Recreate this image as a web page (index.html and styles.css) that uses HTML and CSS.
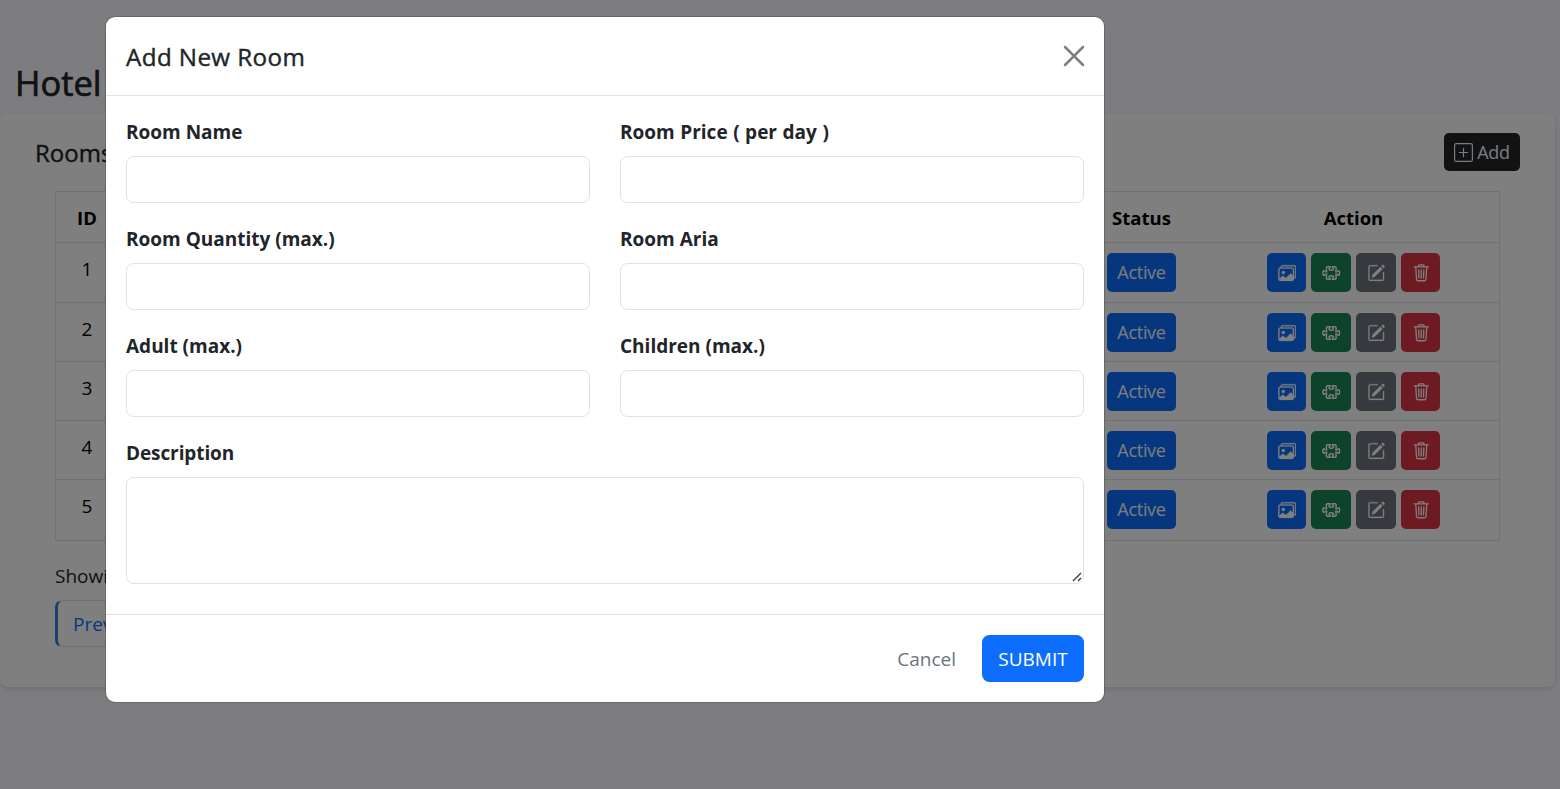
FILE: index.html
```html
<!DOCTYPE html>
<html lang="en">
<head>
<meta charset="utf-8">
<title>Hotel Rooms</title>
<link rel="stylesheet" href="styles.css">
</head>
<body>
<svg class="sprite" aria-hidden="true">
  <symbol id="plus" viewBox="0 0 16 16"><path d="M14 1a1 1 0 0 1 1 1v12a1 1 0 0 1-1 1H2a1 1 0 0 1-1-1V2a1 1 0 0 1 1-1zM2 0a2 2 0 0 0-2 2v12a2 2 0 0 0 2 2h12a2 2 0 0 0 2-2V2a2 2 0 0 0-2-2z"/><path d="M8 4a.5.5 0 0 1 .5.5v3h3a.5.5 0 0 1 0 1h-3v3a.5.5 0 0 1-1 0v-3h-3a.5.5 0 0 1 0-1h3v-3A.5.5 0 0 1 8 4"/></symbol>
  <symbol id="images" viewBox="0 0 16 16"><path d="M4.502 9a1.5 1.5 0 1 0 0-3 1.5 1.5 0 0 0 0 3"/><path stroke="currentColor" stroke-width=".25" d="M14.002 13a2 2 0 0 1-2 2h-10a2 2 0 0 1-2-2V5A2 2 0 0 1 2 3a2 2 0 0 1 2-2h10a2 2 0 0 1 2 2v8a2 2 0 0 1-1.998 2M14 2H4a1 1 0 0 0-1 1h9.002a2 2 0 0 1 2 2v7A1 1 0 0 0 15 11V3a1 1 0 0 0-1-1M2.002 4a1 1 0 0 0-1 1v8l2.646-2.354a.5.5 0 0 1 .63-.062l2.66 1.773 3.71-3.71a.5.5 0 0 1 .577-.094l1.777 1.947V5a1 1 0 0 0-1-1z"/></symbol>
  <symbol id="puzzle" viewBox="0 0 16 16"><path fill="none" stroke="currentColor" stroke-width="1.25" d="M4.600 2.500H7v.4c0 .4-.3.8-.7 1.100C5.400 4.800 6.400 5.500 8 5.500s2.600-.7 1.700-1.500C9.300 3.700 9 3.300 9 2.900v-.4h2.400a1 1 0 0 1 1 1.100L12.100 7h.8c.4 0 .7-.3 1-.7.8-.9 1.600.2 1.600 1.700s-.8 2.600-1.600 1.700c-.3-.4-.6-.7-1-.7h-.8l.3 3.400a1 1 0 0 1-1 1.100H9v-.4c0-.4.300-.8.700-1.100.9-.8-.1-1.500-1.700-1.500s-2.600.7-1.700 1.500c.4.300.7.700.7 1.100v.4H4.600a1 1 0 0 1-1-1.100L3.900 9h-.8c-.4 0-.7.300-1 .7C1.300 10.600.5 9.500.5 8s.8-2.600 1.600-1.700c.3.400.6.700 1 .7h.8l-.3-3.400a1 1 0 0 1 1-1.100z"/></symbol>
  <symbol id="pencil" viewBox="0 0 16 16"><path d="M15.502 1.940a.5.5 0 0 1 0 .706L14.459 3.690l-2-2L13.502.646a.5.5 0 0 1 .707 0l1.293 1.293zm-1.750 2.456-2-2L4.939 9.210a.5.5 0 0 0-.121.196l-.805 2.414a.25.25 0 0 0 .316.316l2.414-.805a.5.5 0 0 0 .196-.12z"/><path stroke="currentColor" stroke-width=".2" d="M1 13.500A1.500 1.500 0 0 0 2.500 15h11a1.500 1.500 0 0 0 1.500-1.500v-6a.5.5 0 0 0-1 0v6a.5.5 0 0 1-.5.5h-11a.5.5 0 0 1-.5-.5v-11a.5.5 0 0 1 .5-.5H9a.5.5 0 0 0 0-1H2.500A1.500 1.500 0 0 0 1 2.500z"/></symbol>
  <symbol id="trash" viewBox="0 0 16 16"><path fill="none" stroke="currentColor" stroke-width="1.15" stroke-linecap="round" d="M5.500 2V1.500a1 1 0 0 1 1-.7h3a1 1 0 0 1 1 .7V2.500M1.700 2.500h12.600M3.100 2.500l.7 11a1.500 1.500 0 0 0 1.500 1.400h5.400a1.500 1.500 0 0 0 1.500-1.400l.7-11M5.700 5.200l.3 7.200M8 5.200v7.200M10.300 5.200l-.3 7.200"/></symbol>
</svg>

<main class="page">
  <h1 class="page-title">Hotel</h1>
  <section class="card">
    <div class="card-head">
      <h2 class="card-title">Rooms</h2>
      <button class="btn btn-dark"><svg class="icon-add"><use href="#plus"/></svg><span>Add</span></button>
    </div>
    <div class="table">
      <div class="row head"><span>ID</span><span></span><span>Status</span><span>Action</span></div>
      <div class="row"><span>1</span><span></span><span><button class="btn btn-primary">Active</button></span><span class="actions"><button class="tool blue"><svg><use href="#images"/></svg></button><button class="tool green"><svg><use href="#puzzle"/></svg></button><button class="tool gray"><svg><use href="#pencil"/></svg></button><button class="tool red"><svg><use href="#trash"/></svg></button></span></div>
      <div class="row"><span>2</span><span></span><span><button class="btn btn-primary">Active</button></span><span class="actions"><button class="tool blue"><svg><use href="#images"/></svg></button><button class="tool green"><svg><use href="#puzzle"/></svg></button><button class="tool gray"><svg><use href="#pencil"/></svg></button><button class="tool red"><svg><use href="#trash"/></svg></button></span></div>
      <div class="row"><span>3</span><span></span><span><button class="btn btn-primary">Active</button></span><span class="actions"><button class="tool blue"><svg><use href="#images"/></svg></button><button class="tool green"><svg><use href="#puzzle"/></svg></button><button class="tool gray"><svg><use href="#pencil"/></svg></button><button class="tool red"><svg><use href="#trash"/></svg></button></span></div>
      <div class="row"><span>4</span><span></span><span><button class="btn btn-primary">Active</button></span><span class="actions"><button class="tool blue"><svg><use href="#images"/></svg></button><button class="tool green"><svg><use href="#puzzle"/></svg></button><button class="tool gray"><svg><use href="#pencil"/></svg></button><button class="tool red"><svg><use href="#trash"/></svg></button></span></div>
      <div class="row"><span>5</span><span></span><span><button class="btn btn-primary">Active</button></span><span class="actions"><button class="tool blue"><svg><use href="#images"/></svg></button><button class="tool green"><svg><use href="#puzzle"/></svg></button><button class="tool gray"><svg><use href="#pencil"/></svg></button><button class="tool red"><svg><use href="#trash"/></svg></button></span></div>
    </div>
    <p class="summary">Showing</p>
    <a class="prev">Previous</a>
  </section>
</main>

<div class="backdrop">
  <form class="modal">
    <header class="modal-head">
      <h2 class="modal-title">Add New Room</h2>
      <svg class="close" viewBox="0 0 22 22"><path d="M2 2l18 18M20 2L2 20"/></svg>
    </header>
    <div class="modal-body">
      <label class="field"><span>Room Name</span><input></label>
      <label class="field price"><span>Room Price ( per day )</span><input></label>
      <label class="field"><span>Room Quantity (max.)</span><input></label>
      <label class="field"><span>Room Aria</span><input></label>
      <label class="field"><span>Adult (max.)</span><input></label>
      <label class="field"><span>Children (max.)</span><input></label>
      <label class="field wide"><span>Description</span><textarea></textarea><svg class="grip" viewBox="0 0 10 10"><path d="M1 9L9 1M6 9L9 6"/></svg></label>
    </div>
    <footer class="modal-foot">
      <button type="button" class="cancel">Cancel</button>
      <button type="button" class="submit">SUBMIT</button>
    </footer>
  </form>
</div>
</body>
</html>
```

FILE: styles.css
```css
* { box-sizing: border-box; }
body {
  margin: 0;
  height: 789px;
  overflow: hidden;
  background: #fafafe;
  color: #212529;
  font: 400 19px/30px "Open Sans", "Noto Sans", sans-serif;
}
h1, h2, p { margin: 0; }
h1, h2 { -webkit-text-stroke: .4px currentColor; }
button, input, textarea { font: inherit; }
button { border: 0; }
.sprite { display: none; }
svg { fill: currentColor; }

.page { padding-top: 60px; }
.page-title {
  height: 53px;
  padding-left: 15px;
  font-size: 34.5px;
  line-height: 46px;
  font-weight: 500;
  -webkit-text-stroke-width: .7px;
}
.card {
  width: 1555px;
  height: 574px;
  padding: 20px 35px;
  background: #fff;
  border-radius: 8px;
  box-shadow: 0 2px 5px rgba(0, 0, 0, .12);
}
.card-head { display: flex; justify-content: space-between; height: 58px; }
.card-title { font-size: 24px; line-height: 40px; font-weight: 500; }
.btn {
  height: 38px;
  padding: 0;
  border-radius: 5px;
  color: #f8f9fa;
  font-size: 18px;
}
.btn-dark { display: flex; align-items: center; justify-content: center; gap: 4px; width: 76px; background: #212529; letter-spacing: -.3px; }
.icon-add { width: 19px; height: 19px; }
.btn-primary { display: block; width: 69px; height: 39px; padding-bottom: 1px; background: #0d6efd; letter-spacing: -.3px; }

.table {
  width: 1445px;
  margin-left: 20px;
  border: 1px solid #dee2e6;
  border-bottom: 0;
  color: #000;
}
.row {
  display: grid;
  grid-template-columns: 62px 957px 133px 291px;
  justify-items: center;
  height: 59px;
  padding-top: 10px;
  border-bottom: 1px solid #dee2e6;
}
.row > span:first-child { padding-top: 1px; }
.row.head { height: 51px; font-weight: 700; font-size: 18.5px; }
.row.head > span { padding-top: 1px; }
.row.head + .row { height: 60px; }
.row:last-child { height: 61px; }
.actions { display: flex; gap: 5px; }
.tool {
  display: flex;
  align-items: center;
  justify-content: center;
  width: 39.6px;
  height: 39px;
  padding: 0 0 0 1px;
  border-radius: 5px;
  color: #fff;
}
.tool svg { width: 18.5px; height: 18px; }
.blue { background: #0d6efd; }
.green { background: #198754; }
.gray { background: #6c757d; }
.red { background: #dc3545; }
.summary { margin: 20px 0 9px 20px; }
.prev {
  display: block;
  width: 110px;
  height: 47px;
  margin-left: 20px;
  padding: 8px 15px;
  border: 1px solid #dee2e6;
  border-left: 3px solid #3a7be0;
  border-radius: 7px 0 0 7px;
  color: #0d6efd;
}

.backdrop {
  position: absolute;
  inset: 0;
  padding: 16px 0 0 105px;
  background: rgba(0, 0, 0, .5);
}
.modal {
  width: 1000px;
  height: 687px;
  background: #fff;
  background-clip: padding-box;
  border: 1px solid rgba(0, 0, 0, .175);
  border-radius: 10px;
}
.modal-head {
  display: flex;
  align-items: center;
  justify-content: space-between;
  height: 79px;
  padding: 0 20px;
  border-bottom: 1px solid #dee2e6;
}
.modal-title { padding-top: 1px; font-size: 24.2px; line-height: 38px; font-weight: 500; letter-spacing: .4px; }
.close { width: 22px; height: 22px; margin-right: -1px; fill: none; stroke: #7f7f7f; stroke-width: 2.5; stroke-linecap: round; }
.modal-body {
  display: grid;
  grid-template-columns: 464px 464px;
  column-gap: 30px;
  row-gap: 20px;
  height: 518px;
  padding: 20px 20px 0;
  align-content: start;
}
.field { display: block; font-size: 19px; font-weight: 700; }
.field span { display: block; height: 40px; line-height: 32px; white-space: nowrap; }
.price { word-spacing: .6px; }
.field input, .field textarea {
  display: block;
  width: 100%;
  height: 47px;
  padding: 0 15px;
  border: 1px solid #dee2e6;
  border-radius: 7.5px;
  background: #fff;
}
.wide { position: relative; grid-column: 1 / -1; }
.wide span { letter-spacing: -.1px; }
.field textarea { height: 107px; resize: none; }
.grip {
  position: absolute;
  right: 2px;
  bottom: 2px;
  width: 10px;
  height: 10px;
  fill: none;
  stroke: #444;
  stroke-width: 1.5;
}
.modal-foot {
  display: flex;
  justify-content: flex-end;
  align-items: center;
  gap: 26px;
  height: 88px;
  padding: 0 20px;
  border-top: 1px solid #dee2e6;
}
.cancel { padding: 0; background: none; color: #6c757d; }
.submit { width: 102px; height: 47px; padding: 0; border-radius: 7.5px; background: #0d6efd; color: #fff; }
```
